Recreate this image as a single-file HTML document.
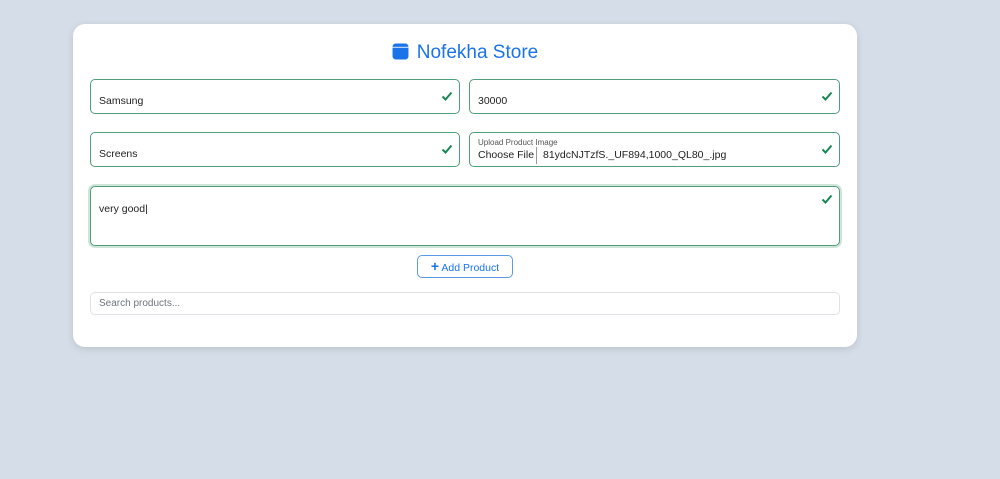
<!DOCTYPE html>
<html><head><style>
body{margin:0;background:#d5dde8;font-family:"Liberation Sans",sans-serif;width:1000px;height:479px;overflow:hidden;position:relative}
.card{position:absolute;left:73px;top:24px;width:784px;height:323px;background:#fff;border-radius:12px;box-shadow:0 2px 8px rgba(0,0,0,.12)}
h1{position:absolute;left:73px;width:784px;top:42px;margin:0;text-align:center;font-weight:normal;font-size:19px;color:#1a73e8}
.f{position:absolute;border:1px solid #4e9f7a;border-radius:5px;background:#fff;font-size:10.5px;color:#222;box-sizing:border-box}
.f .t{position:absolute;left:8px;top:15px}
.ck{position:absolute;right:6px;top:10px;width:12px;height:12px}
.btn{position:absolute;left:417px;top:255px;width:96px;height:23px;border:1px solid #5a9ae8;border-radius:5px;box-sizing:border-box;color:#1a73e8;font-size:10.5px;text-align:center;line-height:21px}
.s{position:absolute;left:90px;top:292px;width:750px;height:23px;border:1px solid #dee2e6;border-radius:5px;box-sizing:border-box;font-size:10px;color:#6c757d;padding:5px 8px}
</style></head><body>
<div class="card"></div>
<h1><svg width="17" height="17" viewBox="0 0 16 16" style="vertical-align:-2px;margin-right:8px"><rect x="0.5" y="0.5" width="15" height="15" rx="3" fill="#1a73e8"/><line x1="0.5" y1="4" x2="15.5" y2="4" stroke="#fff" stroke-width=".8"/></svg>Nofekha Store</h1>
<div class="f" style="left:90px;top:79px;width:370px;height:35px"><span class="t">Samsung</span><svg class="ck" viewBox="0 0 12 12"><path d="M1.5 6.5l3 3 6-7" stroke="#198754" stroke-width="2" fill="none"/></svg></div>
<div class="f" style="left:469px;top:79px;width:371px;height:35px"><span class="t">30000</span><svg class="ck" viewBox="0 0 12 12"><path d="M1.5 6.5l3 3 6-7" stroke="#198754" stroke-width="2" fill="none"/></svg></div>
<div class="f" style="left:90px;top:132px;width:370px;height:35px"><span class="t">Screens</span><svg class="ck" viewBox="0 0 12 12"><path d="M1.5 6.5l3 3 6-7" stroke="#198754" stroke-width="2" fill="none"/></svg></div>
<div class="f" style="left:469px;top:132px;width:371px;height:35px"><span style="position:absolute;left:8px;top:5px;font-size:8px;color:#555">Upload Product Image</span><span style="position:absolute;left:8px;top:16px;font-size:10.5px">Choose File</span><span style="position:absolute;left:66px;top:14px;height:17px;border-left:1px solid #999"></span><span style="position:absolute;left:73px;top:16px">81ydcNJTzfS._UF894,1000_QL80_.jpg</span><svg class="ck" viewBox="0 0 12 12"><path d="M1.5 6.5l3 3 6-7" stroke="#198754" stroke-width="2" fill="none"/></svg></div>
<div class="f" style="left:90px;top:186px;width:750px;height:60px;box-shadow:0 0 0 2px #cfe5da"><span class="t" style="top:16px">very good|</span><svg class="ck" style="top:6px" viewBox="0 0 12 12"><path d="M1.5 6.5l3 3 6-7" stroke="#198754" stroke-width="2" fill="none"/></svg></div>
<div class="btn"><b style="font-size:14px">+</b> Add Product</div>
<div class="s">Search products...</div>
</body></html>
